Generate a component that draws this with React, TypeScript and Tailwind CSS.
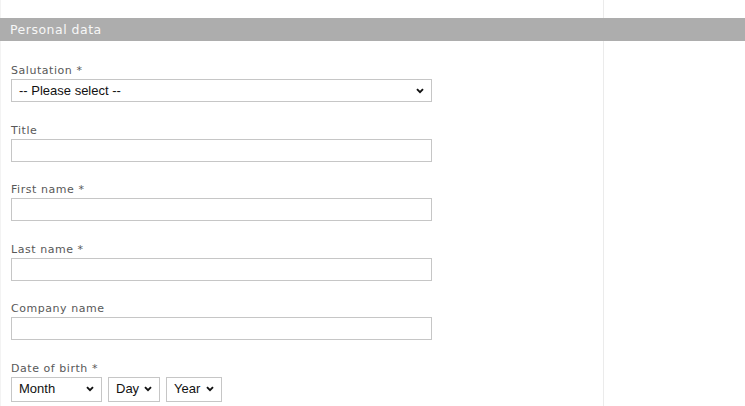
import React from "react";

const Chevron = () => (
  <svg width="8" height="6" viewBox="0 0 8 6" className="pointer-events-none absolute right-[7px] top-1/2 -translate-y-1/2">
    <path d="M1 1.2 L4 4.2 L7 1.2" fill="none" stroke="#111" strokeWidth="1.9" />
  </svg>
);

const Select = ({ text, w, h }: { text: string; w: string; h: string }) => (
  <div className={`relative ${w} ${h} border border-[#c6c6c6] bg-white flex items-center pl-[7px] text-[13px] text-[#111]`} style={{ fontFamily: '"Liberation Sans", Arial, sans-serif' }}>
    <span>{text}</span>
    <Chevron />
  </div>
);

const Field = ({ label, children }: { label: string; children: React.ReactNode }) => (
  <div className="flex flex-col mb-[19.5px]">
    <div className="h-[16px] leading-[16px] text-[11px] tracking-[0.55px] text-[#585858] mt-[1px]">{label}</div>
    {children}
  </div>
);

const Input = () => <div className="w-[421px] h-[23px] border border-[#c6c6c6] bg-white" />;

export default function App() {
  return (
    <div className="w-[745px] h-[406px] overflow-hidden bg-white relative" style={{ fontFamily: '"DejaVu Sans", Verdana, sans-serif' }}>
      <div className="absolute left-[603px] top-0 bottom-0 w-px bg-[#ebebeb]" />
      <div className="absolute left-0 top-0 bottom-0 w-px bg-[#f3f3f3]" />
      <div className="h-[18px]" />
      <div className="relative h-[23px] bg-[#adadad] text-[#f7f7f7] text-[12.5px] tracking-[0.5px] leading-[23px] pl-[10px]">Personal data</div>
      <div className="pl-[11px] pt-[21px]">
        <Field label="Salutation *">
          <Select text="-- Please select --" w="w-[421px]" h="h-[23px]" />
        </Field>
        <Field label="Title"><Input /></Field>
        <Field label="First name *"><Input /></Field>
        <Field label="Last name *"><Input /></Field>
        <Field label="Company name"><Input /></Field>
        <Field label="Date of birth *">
          <div className="flex gap-[6px]">
            <Select text="Month" w="w-[91px]" h="h-[25px]" />
            <Select text="Day" w="w-[52px]" h="h-[25px]" />
            <Select text="Year" w="w-[56px]" h="h-[25px]" />
          </div>
        </Field>
      </div>
    </div>
  );
}
